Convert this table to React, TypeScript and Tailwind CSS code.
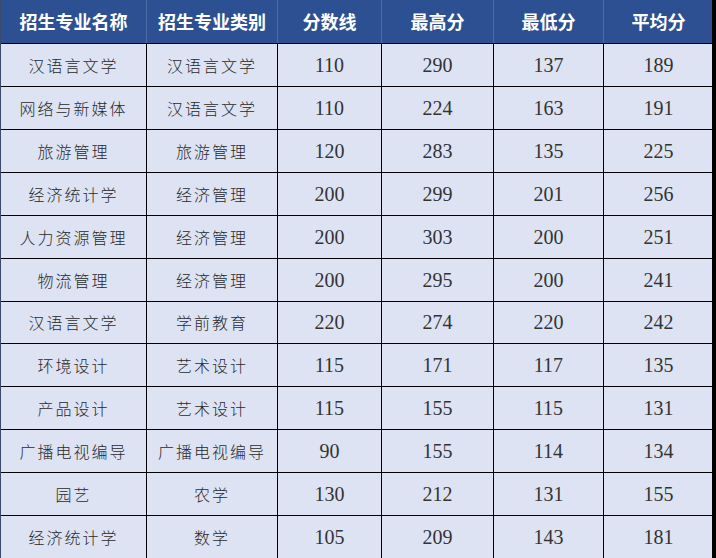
const headers = ["招生专业名称", "招生专业类别", "分数线", "最高分", "最低分", "平均分"];

const rows: string[][] = [
  ["汉语言文学", "汉语言文学", "110", "290", "137", "189"],
  ["网络与新媒体", "汉语言文学", "110", "224", "163", "191"],
  ["旅游管理", "旅游管理", "120", "283", "135", "225"],
  ["经济统计学", "经济管理", "200", "299", "201", "256"],
  ["人力资源管理", "经济管理", "200", "303", "200", "251"],
  ["物流管理", "经济管理", "200", "295", "200", "241"],
  ["汉语言文学", "学前教育", "220", "274", "220", "242"],
  ["环境设计", "艺术设计", "115", "171", "117", "135"],
  ["产品设计", "艺术设计", "115", "155", "115", "131"],
  ["广播电视编导", "广播电视编导", "90", "155", "114", "134"],
  ["园艺", "农学", "130", "212", "131", "155"],
  ["经济统计学", "数学", "105", "209", "143", "181"],
];

const widths = ["w-[145px]", "w-[131px]", "w-[104px]", "w-[112px]", "w-[110px]", "w-[110px]"];

export default function App() {
  return (
    <div className="w-[716px] h-[558px] flex flex-col bg-[#dde3f3] border-l border-[#3a4a6a] border-r-4 border-r-black overflow-hidden">
      <div className="h-[43px] shrink-0 flex bg-[#2c5092]">
        {headers.map((h, i) => (
          <div
            key={h}
            className={`${widths[i]} shrink-0 flex items-center justify-center text-white font-bold text-[18px] font-['Noto_Sans_CJK_SC',sans-serif] ${i > 0 ? "border-l border-[#4c6aa6]" : ""}`}
          >
            {h}
          </div>
        ))}
      </div>
      {rows.map((r, ri) => (
        <div key={ri} className="flex-1 flex border-t border-black">
          {r.map((c, i) => (
            <div
              key={i}
              className={`${widths[i]} shrink-0 flex items-center justify-center ${i > 0 ? "border-l border-black" : ""} ${
                i < 2
                  ? "text-[16px] text-[#2a2a2a] font-light tracking-[2px] font-['Noto_Sans_CJK_SC',sans-serif]"
                  : "text-[20px] text-[#333333] font-['Liberation_Serif',serif]"
              }`}
            >
              {c}
            </div>
          ))}
        </div>
      ))}
    </div>
  );
}
